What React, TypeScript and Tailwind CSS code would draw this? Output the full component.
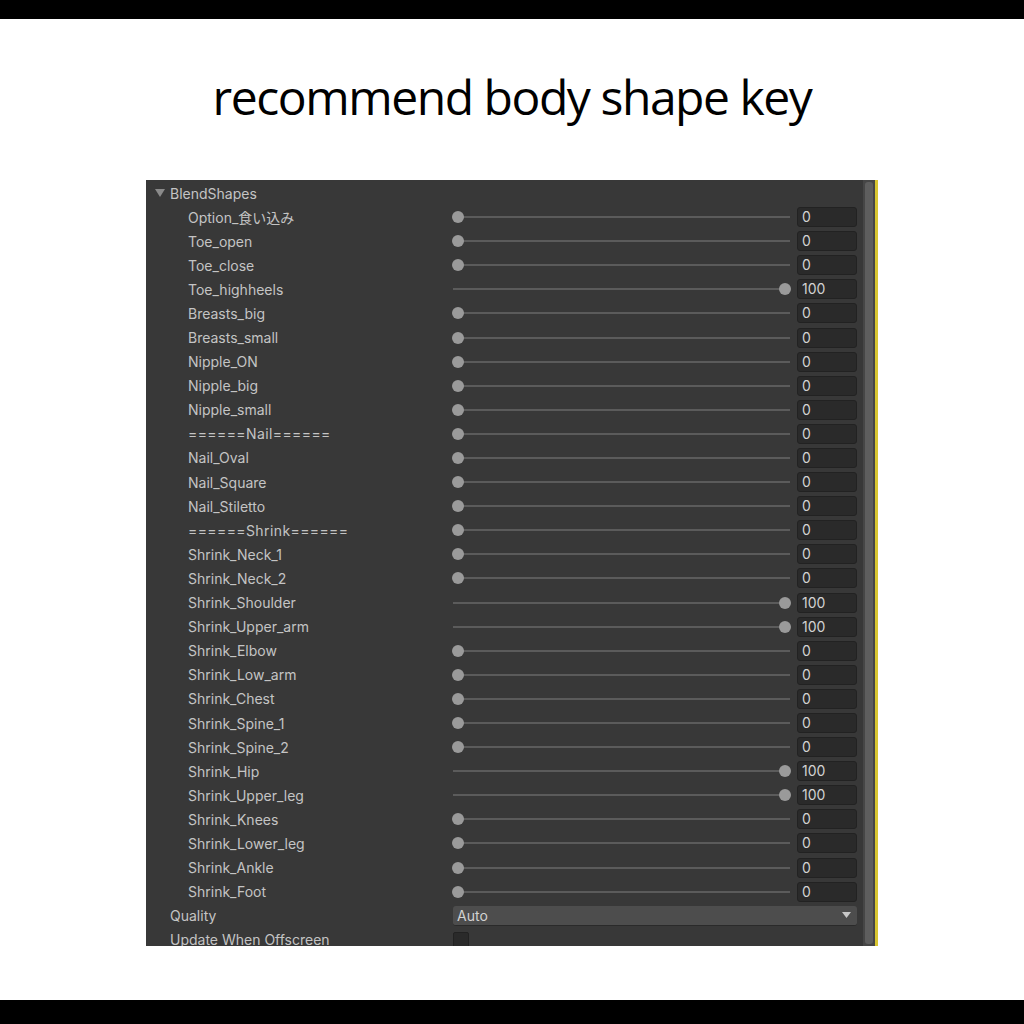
import React from 'react';

type Row = { name: string; value: number };

const rows: Row[] = [
  { name: 'Option_食い込み', value: 0 },
  { name: 'Toe_open', value: 0 },
  { name: 'Toe_close', value: 0 },
  { name: 'Toe_highheels', value: 100 },
  { name: 'Breasts_big', value: 0 },
  { name: 'Breasts_small', value: 0 },
  { name: 'Nipple_ON', value: 0 },
  { name: 'Nipple_big', value: 0 },
  { name: 'Nipple_small', value: 0 },
  { name: '======Nail======', value: 0 },
  { name: 'Nail_Oval', value: 0 },
  { name: 'Nail_Square', value: 0 },
  { name: 'Nail_Stiletto', value: 0 },
  { name: '======Shrink======', value: 0 },
  { name: 'Shrink_Neck_1', value: 0 },
  { name: 'Shrink_Neck_2', value: 0 },
  { name: 'Shrink_Shoulder', value: 100 },
  { name: 'Shrink_Upper_arm', value: 100 },
  { name: 'Shrink_Elbow', value: 0 },
  { name: 'Shrink_Low_arm', value: 0 },
  { name: 'Shrink_Chest', value: 0 },
  { name: 'Shrink_Spine_1', value: 0 },
  { name: 'Shrink_Spine_2', value: 0 },
  { name: 'Shrink_Hip', value: 100 },
  { name: 'Shrink_Upper_leg', value: 100 },
  { name: 'Shrink_Knees', value: 0 },
  { name: 'Shrink_Lower_leg', value: 0 },
  { name: 'Shrink_Ankle', value: 0 },
  { name: 'Shrink_Foot', value: 0 },
];

const uiFont = { fontFamily: 'Inter, "Noto Sans CJK JP", sans-serif' };

function Slider({ value }: { value: number }) {
  const full = value >= 100;
  return (
    <div className="relative h-full w-[337px] flex items-center">
      <div className="h-[2px] w-full bg-[#5b5b5b]" />
      <div
        className={
          'absolute top-1/2 -translate-y-1/2 w-[12px] h-[12px] rounded-full bg-[#9a9a9a] ' +
          (full ? 'right-[-1px]' : 'left-[-1px]')
        }
      />
    </div>
  );
}

function BlendRow({ row }: { row: Row }) {
  // separator rows use wider '=' glyphs in the editor font
  const sep = row.name.startsWith('=');
  return (
    <div className="flex items-center h-[24.1px]">
      <div
        className={
          'w-[265px] pl-[42px] text-[14px] text-[#c4c4c4] whitespace-nowrap ' + (sep ? 'tracking-[0.4px]' : '')
        }
      >
        {row.name}
      </div>
      <div className="ml-[42px] h-full">
        <Slider value={row.value} />
      </div>
      <div className="ml-[7px] w-[60px] h-[20px] rounded-[3px] bg-[#2a2a2a] border border-[#222] text-[14px] text-[#d2d2d2] pl-[4px] leading-[18px]">
        {row.value}
      </div>
    </div>
  );
}

export default function App() {
  return (
    <div className="w-[1024px] h-[1024px] bg-white flex flex-col">
      <div className="h-[19px] bg-black" />
      <div className="flex-1 flex flex-col items-center">
        <h1
          className="mt-[52px] text-[48px] leading-[52px] text-black tracking-[-1.45px]"
          style={{ fontFamily: '"Open Sans", sans-serif' }}
        >
          recommend body shape key
        </h1>
        <div className="mt-[57px] self-start ml-[146px] flex h-[766px]" style={uiFont}>
          <div className="w-[717px] bg-[#383838] overflow-hidden pt-[1px]">
            <div className="flex items-center h-[24px] pl-[9px] text-[14px] text-[#c4c4c4]">
              <svg width="10" height="8" viewBox="0 0 10 8" className="mr-[5px]">
                <path d="M0 0 L10 0 L5 8 Z" fill="#8a8a8a" />
              </svg>
              BlendShapes
            </div>
            {rows.map((r) => (
              <BlendRow key={r.name} row={r} />
            ))}
            <div className="flex items-center h-[24.1px]">
              <div className="w-[307px] pl-[24px] text-[14px] text-[#c4c4c4]">Quality</div>
              <div className="w-[404px] h-[20px] rounded-[3px] bg-[#4d4d4d] border-b border-[#2a2a2a] flex items-center justify-between pl-[4px] pr-[6px] text-[14px] text-[#d2d2d2]">
                <span>Auto</span>
                <svg width="9" height="6" viewBox="0 0 9 6">
                  <path d="M0 0 L9 0 L4.5 6 Z" fill="#c8c8c8" />
                </svg>
              </div>
            </div>
            <div className="flex items-start h-[24px] pt-[3px]">
              <div className="w-[307px] pl-[24px] text-[14px] text-[#c4c4c4] leading-[18px]">Update When Offscreen</div>
              <div className="mt-[1px] w-[16px] h-[16px] rounded-[2px] bg-[#2a2a2a] border border-[#222]" />
            </div>
          </div>
          <div className="w-[12px] bg-[#464646] flex justify-center py-[2px]">
            <div className="w-[8px] h-full rounded-[3px] bg-[#5e5e5e]" />
          </div>
          <div className="w-[3px] bg-[#d8c530]" />
        </div>
      </div>
      <div className="h-[24px] bg-black" />
    </div>
  );
}
